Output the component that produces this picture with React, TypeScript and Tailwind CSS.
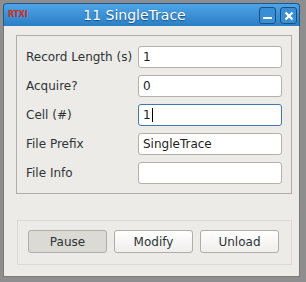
import React from 'react';

const fields = [
  { label: 'Record Length (s)', value: '1' },
  { label: 'Acquire?', value: '0' },
  { label: 'Cell (#)', value: '1', focused: true },
  { label: 'File Prefix', value: 'SingleTrace' },
  { label: 'File Info', value: '' },
];

const App: React.FC = () => {
  return (
    <div className="w-[306px] h-[282px] bg-[#8e8e8e] pl-[3px] pt-[3px] pr-[6px] pb-[5px] font-['DejaVu_Sans',sans-serif]">
      <div className="w-full h-full flex flex-col">
        {/* Title bar */}
        <div className="h-[23px] flex items-center relative rounded-t-[4px] border border-b-0 border-[#1d5a94] bg-gradient-to-b from-[#4ea5e6] to-[#2b7ec4]">
          <span className="absolute left-[4px] top-[7px] text-[8px] leading-none font-bold text-[#d42a1a] tracking-tight">RTXI</span>
          <span className="flex-1 text-center text-[14px] text-white [text-shadow:0_1px_1px_#1b4f80] pl-[6px] pr-[40px]">11 SingleTrace</span>
          <div className="absolute right-[2px] top-[3px] flex gap-[4px]">
            <div className="w-[17px] h-[17px] rounded-[3px] border border-[#1c4f80] bg-[#3a8fd4] flex items-end justify-center pb-[4px]">
              <div className="w-[9px] h-[2px] bg-white" />
            </div>
            <div className="w-[17px] h-[17px] rounded-[3px] border border-[#1c4f80] bg-[#3a8fd4] flex items-center justify-center">
              <svg width="10" height="10" viewBox="0 0 10 10">
                <path d="M1.5 1.5 L8.5 8.5 M8.5 1.5 L1.5 8.5" stroke="white" strokeWidth="2.2" />
              </svg>
            </div>
          </div>
        </div>

        {/* Body */}
        <div className="flex-1 bg-[#edebe7] border-l border-r border-b border-[#7a7a7a] flex flex-col pl-[12px] pr-[7px] pt-[9px]">
          <div className="h-[159px] border border-[#b0ada8] pl-[9px] pr-[9px] pt-[10px] flex flex-col gap-[7px]">
            {fields.map(f => (
              <div key={f.label} className="flex items-center h-[22px]">
                <span className="w-[112px] whitespace-nowrap text-[12px] text-[#2e3436]">{f.label}</span>
                <div
                  className={`flex-1 h-[22px] bg-white rounded-[3px] flex items-center px-[4px] text-[12px] text-[#1e1e1e] border ${
                    f.focused ? 'border-[#3f79b0]' : 'border-[#b4b0aa]'
                  }`}
                >
                  {f.value}
                  {f.focused && <span className="w-px h-[14px] bg-black ml-[1px]" />}
                </div>
              </div>
            ))}
          </div>

          <div className="mt-[26px] ml-[1px] h-[45px] border border-[#dcd9d4] pl-[10px] pt-[9px] flex gap-[7px]">
            <button className="w-[79px] h-[23px] rounded-[3px] border border-[#b0aca6] bg-[#dcdad5] text-[12px] text-[#2e3436]">
              Pause
            </button>
            <button className="w-[79px] h-[23px] rounded-[3px] border border-[#b0aca6] bg-gradient-to-b from-[#ffffff] to-[#f0eeeb] text-[12px] text-[#2e3436]">
              Modify
            </button>
            <button className="w-[79px] h-[23px] rounded-[3px] border border-[#b0aca6] bg-gradient-to-b from-[#ffffff] to-[#f0eeeb] text-[12px] text-[#2e3436]">
              Unload
            </button>
          </div>
        </div>
      </div>
    </div>
  );
};

export default App;
